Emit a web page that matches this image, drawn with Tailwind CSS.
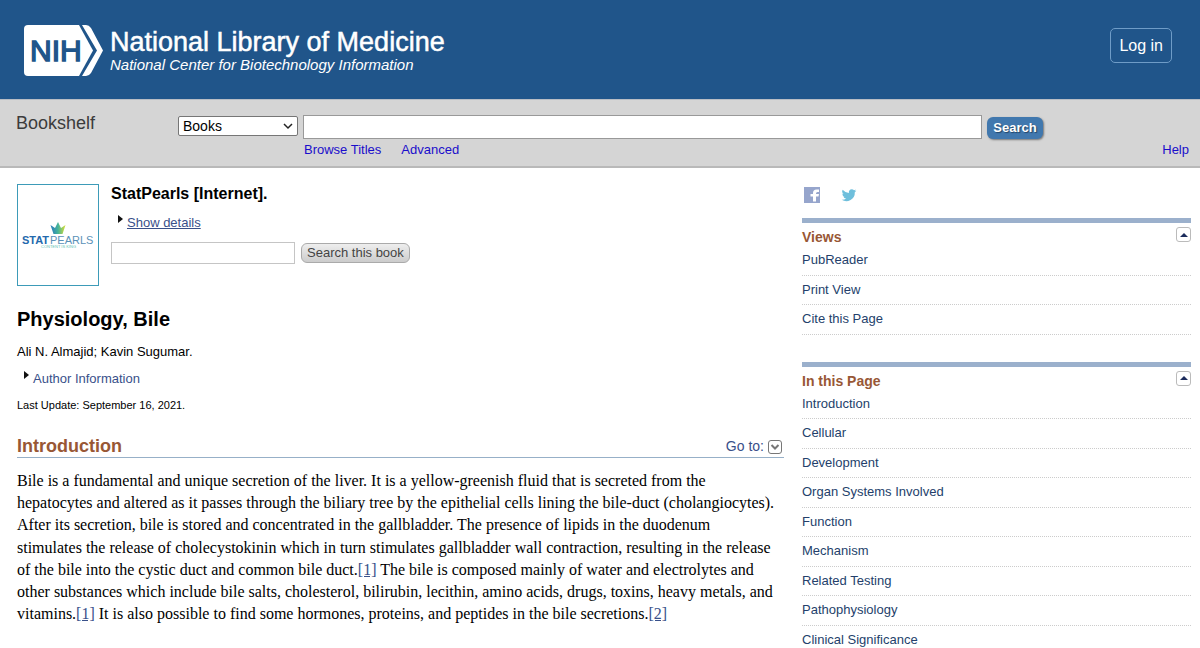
<!DOCTYPE html>
<html lang="en">
<head>
<meta charset="utf-8">
<meta name="viewport" content="width=device-width, initial-scale=1">
<title>Physiology, Bile - StatPearls - NCBI Bookshelf</title>
<script src="https://cdn.jsdelivr.net/npm/@tailwindcss/browser@4"></script>
</head>
<body class="min-h-screen overflow-x-hidden bg-white font-['Liberation_Sans',Arial,sans-serif] text-[13px] text-black">
<header class="flex items-start justify-between bg-[#20558a] px-6 pt-[25px] pb-[23px] text-white">
  <a href="#" class="flex items-start gap-[7px]">
    <svg class="h-[51px] w-[79px]" viewBox="0 0 79 51" role="img" aria-label="NIH">
      <path fill="#fff" d="M4 0H55L69 25.500L55 51H4Q0 51 0 47V4Q0 0 4 0Z"/>
      <path fill="#fff" d="M58 0H62Q65 0 67 3L79 25.500L67 48Q65 51 62 51H58L73 25.500Z"/>
      <text x="6" y="36" font-family="Liberation Sans, Arial, sans-serif" font-size="30" fill="#20558a" stroke="#20558a" stroke-width="1.400">NIH</text>
    </svg>
    <span class="block pt-[3px]">
      <span class="block text-[27px] leading-[28px] [-webkit-text-stroke:0.5px_white]">National Library of Medicine</span>
      <span class="block text-[15px] leading-[18px] italic">National Center for Biotechnology Information</span>
    </span>
  </a>
  <button type="button" class="mt-[3px] mr-1 h-[35px] rounded-[5px] border border-[#6f9cc7] px-2 text-base">Log in</button>
</header>

<form class="flex items-start border-t border-b-2 border-t-[#b9bdc4] border-b-[#b9b9b9] bg-[#d5d5d5] pt-[15px] pr-[11px] pb-[7px] pl-4">
  <a href="#" class="w-[162px] shrink-0 text-lg leading-[16px] text-[#3c3c3c]">Bookshelf</a>
  <div class="relative mt-px w-[120px] shrink-0">
    <select aria-label="Database" class="block h-5 w-full appearance-none rounded-[2px] border border-[#767676] bg-white pl-1 text-sm leading-[18px]"><option>Books</option></select>
    <svg class="pointer-events-none absolute top-[6px] right-1 h-2 w-3" viewBox="0 0 12 8" fill="none" stroke="#222" stroke-width="1.500"><path d="M2 2l4 4 4-4"/></svg>
  </div>
  <div class="ml-[5px] flex-1">
    <div class="flex items-start gap-[5px]">
      <input type="text" aria-label="Search term" class="h-6 w-[85%] max-w-[679px] border border-[#999] bg-white px-1">
      <button type="button" class="mt-[2px] h-[22px] w-14 rounded-md bg-[#4178ae] text-[13px] leading-[20px] font-bold text-white shadow-[1px_1px_2px_#777] text-shadow-[1px_1px_1px_#234567]">Search</button>
    </div>
    <nav class="mt-[2px] flex gap-5 pl-px leading-[18px] text-[#1a0dcb]">
      <a href="#">Browse Titles</a>
      <a href="#">Advanced</a>
      <a href="#" class="ml-auto">Help</a>
    </nav>
  </div>
</form>

<div class="flex justify-between gap-[18px] pt-4 pr-[9px] pl-[17px]">
  <main class="max-w-[767px] flex-1">
    <div class="flex gap-3">
      <a href="#" class="block shrink-0 border border-[#3d9bb8]">
        <svg class="h-[100px] w-20" viewBox="0 0 80 100" role="img" aria-label="StatPearls">
          <defs><linearGradient id="crown"><stop offset="0" stop-color="#2878bd"/><stop offset=".5" stop-color="#45b49a"/><stop offset="1" stop-color="#d9df32"/></linearGradient></defs>
          <path fill="url(#crown)" d="M32.500 40l4.500 3 3-6 3 6 4.500-3-3 9h-9z"/>
          <text x="4" y="59" font-family="Liberation Sans, Arial, sans-serif" font-size="11" font-weight="bold" fill="#2469ad">STAT</text>
          <text x="32" y="59" font-family="Liberation Sans, Arial, sans-serif" font-size="11" fill="#5a91b8">PEARLS</text>
          <text x="23" y="63" font-family="Liberation Sans, Arial, sans-serif" font-size="4" fill="#65c4b4">CONTENT IS KING</text>
        </svg>
      </a>
      <div class="flex-1">
        <h2 class="text-base leading-[20px] font-bold">StatPearls [Internet].</h2>
        <a href="#" class="mt-[10px] flex gap-1 pl-[7px] leading-[18px] text-[#39508a]">
          <svg class="mt-px h-2 w-[5px]" viewBox="0 0 5 8"><path d="M0 0l5 4-5 4z" fill="#111"/></svg><span class="underline">Show details</span>
        </a>
        <form class="mt-[10px] flex gap-[6px]">
          <input type="text" aria-label="Search term for this book" class="h-[22px] w-[184px] border border-[#c5c5c5] px-1">
          <button type="button" class="mt-px h-5 rounded-md border border-[#aaa] bg-linear-to-b from-[#eee] to-[#ccc] px-[5px] text-[13px] leading-[18px] text-[#444]">Search this book</button>
        </form>
      </div>
    </div>
    <h1 class="mt-5 text-xl leading-[26px] font-bold">Physiology, Bile</h1>
    <p class="mt-[11px] text-[13px] leading-[18px]">Ali N. Almajid; Kavin Sugumar.</p>
    <a href="#" class="mt-[9px] flex gap-1 pl-[7px] leading-[18px] text-[#39508a]">
      <svg class="mt-px h-2 w-[5px]" viewBox="0 0 5 8"><path d="M0 0l5 4-5 4z" fill="#111"/></svg><span>Author Information</span>
    </a>
    <p class="mt-2 text-[11px] leading-[18px]">Last Update: September 16, 2021.</p>
    <div class="mt-[22px] flex items-end justify-between border-b border-[#97b0c8]">
      <h2 class="text-lg leading-[21px] font-bold text-[#985735]">Introduction</h2>
      <a href="#" class="flex items-center gap-1 pr-[2px] text-sm leading-[21px] text-[#39508a]">Go to:
        <svg class="h-[14px] w-[14px]" viewBox="0 0 14 14" fill="none" stroke="#777"><rect x=".5" y=".5" width="13" height="13" rx="2.500"/><path d="M3.500 5l3.500 3.500L10.500 5" stroke-width="2"/></svg>
      </a>
    </div>
    <p class="mt-3 pr-2 font-['Liberation_Serif','Times_New_Roman',serif] text-base leading-[1.39]">Bile is a fundamental and unique secretion of the liver. It is a yellow-greenish fluid that is secreted from the hepatocytes and altered as it passes through the biliary tree by the epithelial cells lining the bile-duct (cholangiocytes). After its secretion, bile is stored and concentrated in the gallbladder. The presence of lipids in the duodenum stimulates the release of cholecystokinin which in turn stimulates gallbladder wall contraction, resulting in the release of the bile into the cystic duct and common bile duct.<a href="#" class="text-[#39508a] underline">[1]</a> The bile is composed mainly of water and electrolytes and other substances which include bile salts, cholesterol, bilirubin, lecithin, amino acids, drugs, toxins, heavy metals, and vitamins.<a href="#" class="text-[#39508a] underline">[1]</a> It is also possible to find some hormones, proteins, and peptides in the bile secretions.<a href="#" class="text-[#39508a] underline">[2]</a></p>
  </main>

  <aside class="w-[389px] shrink-0 text-[#243f6b]">
    <div class="flex gap-[21px] pt-[3px] pl-[2px]">
      <a href="#" aria-label="Facebook"><svg class="h-4 w-4" viewBox="0 0 16 16"><path fill="#96a5cc" d="M0 0h16v16H0z"/><path fill="#fff" d="M9 14.500V9.500H6.500V7H9V6Q9 2.500 12.500 2.500H15V5h-1.500Q12 5 12 6.500V7h3l-.5 2.500H12v5z"/></svg></a>
      <a href="#" aria-label="Twitter"><svg class="h-4 w-4" viewBox="0 0 24 24" fill="#6fbfdc"><path d="M23 5.500a9 9 0 0 1-2.600.7 4.600 4.600 0 0 0 2-2.500 9 9 0 0 1-2.900 1.100 4.500 4.500 0 0 0-7.700 4.100A12.900 12.900 0 0 1 2.500 4.200a4.500 4.500 0 0 0 1.400 6 4.500 4.500 0 0 1-2-.6 4.500 4.500 0 0 0 3.600 4.500 4.600 4.600 0 0 1-2 .1 4.500 4.500 0 0 0 4.200 3.100A9.100 9.100 0 0 1 1 19.200a12.800 12.800 0 0 0 19.700-11.400A9 9 0 0 0 23 5.500z"/></svg></a>
    </div>
    <section class="mt-[15px] border-t-5 border-[#9bb0cc]">
      <div class="flex items-start justify-between pt-1">
        <h3 class="pt-px text-sm leading-[18px] font-bold text-[#985735]">Views</h3>
        <button type="button" aria-label="Collapse Views" class="flex h-[15px] w-[15px] items-center justify-center rounded-[3px] border border-[#bbb]"><svg class="h-1 w-2" viewBox="0 0 8 4"><path d="M0 4l4-4 4 4z" fill="#1c2c5c"/></svg></button>
      </div>
      <ul class="leading-normal">
        <li class="border-b border-dotted border-[#ccc] pt-1 pb-[5px]"><a href="#">PubReader</a></li>
        <li class="border-b border-dotted border-[#ccc] pt-1 pb-[5px]"><a href="#">Print View</a></li>
        <li class="border-b border-dotted border-[#ccc] pt-1 pb-[5px]"><a href="#">Cite this Page</a></li>
      </ul>
    </section>
    <section class="mt-[27px] border-t-5 border-[#9bb0cc]">
      <div class="flex items-start justify-between pt-1">
        <h3 class="pt-px text-sm leading-[18px] font-bold text-[#985735]">In this Page</h3>
        <button type="button" aria-label="Collapse In this Page" class="flex h-[15px] w-[15px] items-center justify-center rounded-[3px] border border-[#bbb]"><svg class="h-1 w-2" viewBox="0 0 8 4"><path d="M0 4l4-4 4 4z" fill="#1c2c5c"/></svg></button>
      </div>
      <ul class="leading-normal">
        <li class="border-b border-dotted border-[#ccc] pt-1 pb-[5px]"><a href="#">Introduction</a></li>
        <li class="border-b border-dotted border-[#ccc] pt-1 pb-[5px]"><a href="#">Cellular</a></li>
        <li class="border-b border-dotted border-[#ccc] pt-1 pb-[5px]"><a href="#">Development</a></li>
        <li class="border-b border-dotted border-[#ccc] pt-1 pb-[5px]"><a href="#">Organ Systems Involved</a></li>
        <li class="border-b border-dotted border-[#ccc] pt-1 pb-[5px]"><a href="#">Function</a></li>
        <li class="border-b border-dotted border-[#ccc] pt-1 pb-[5px]"><a href="#">Mechanism</a></li>
        <li class="border-b border-dotted border-[#ccc] pt-1 pb-[5px]"><a href="#">Related Testing</a></li>
        <li class="border-b border-dotted border-[#ccc] pt-1 pb-[5px]"><a href="#">Pathophysiology</a></li>
        <li class="pt-1"><a href="#">Clinical Significance</a></li>
      </ul>
    </section>
  </aside>
</div>
</body>
</html>
